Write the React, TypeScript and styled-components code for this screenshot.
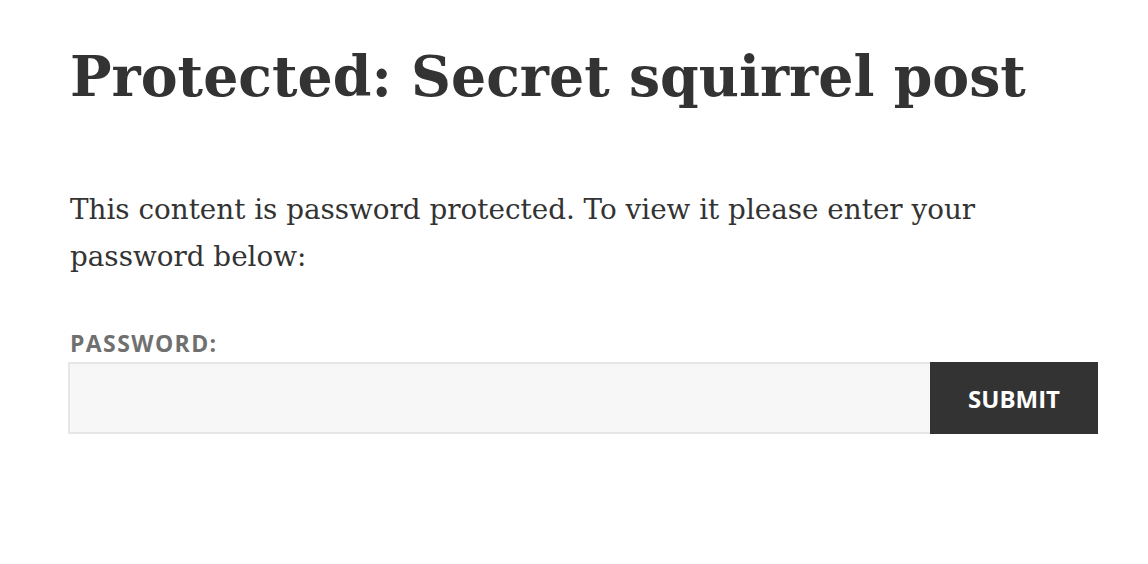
import React from "react";
import styled, { createGlobalStyle } from "styled-components";

const GlobalStyle = createGlobalStyle`
  html, body {
    margin: 0;
    padding: 0;
    background: #ffffff;
  }
`;

const Article = styled.article`
  width: 1030px;
  padding: 39px 0 0 68px;
  color: #333333;
  font-family: "DejaVu Serif", "Liberation Serif", serif;
`;

const Title = styled.h1`
  margin: 0 0 0 2px;
  font-size: 55.3px;
  line-height: 76px;
  font-weight: 700;
`;

const Notice = styled.p`
  margin: 71px 0 0 2px;
  font-size: 27.8px;
  line-height: 47px;
  width: 940px;
`;

const PasswordForm = styled.form`
  margin-top: 49px;
`;

const Label = styled.label`
  display: block;
  margin-left: 2px;
  font-family: "Open Sans", "Noto Sans", sans-serif;
  font-weight: 700;
  font-size: 23px;
  letter-spacing: 1.4px;
  color: #707070;
  text-transform: uppercase;
  line-height: 28px;
`;

const Row = styled.div`
  display: flex;
  margin-top: 5px;
  height: 72px;
`;

const Field = styled.input`
  flex: 1;
  box-sizing: border-box;
  height: 100%;
  border: 2px solid #e6e6e6;
  border-right: none;
  background: #f7f7f7;
  outline: none;
  padding: 0 16px;
  font-size: 20px;
`;

const Submit = styled.button`
  width: 168px;
  height: 100%;
  border: none;
  background: #333333;
  color: #ffffff;
  font-family: "Open Sans", "Noto Sans", sans-serif;
  font-weight: 700;
  font-size: 24px;
  text-transform: uppercase;
  cursor: pointer;
`;

export default function App() {
  return (
    <>
      <GlobalStyle />
      <Article>
        <Title>Protected: Secret squirrel post</Title>
        <Notice>
          This content is password protected. To view it please enter your
          password below:
        </Notice>
        <PasswordForm onSubmit={(e) => e.preventDefault()}>
          <Label htmlFor="pwbox">Password:</Label>
          <Row>
            <Field id="pwbox" type="password" />
            <Submit type="submit">Submit</Submit>
          </Row>
        </PasswordForm>
      </Article>
    </>
  );
}
